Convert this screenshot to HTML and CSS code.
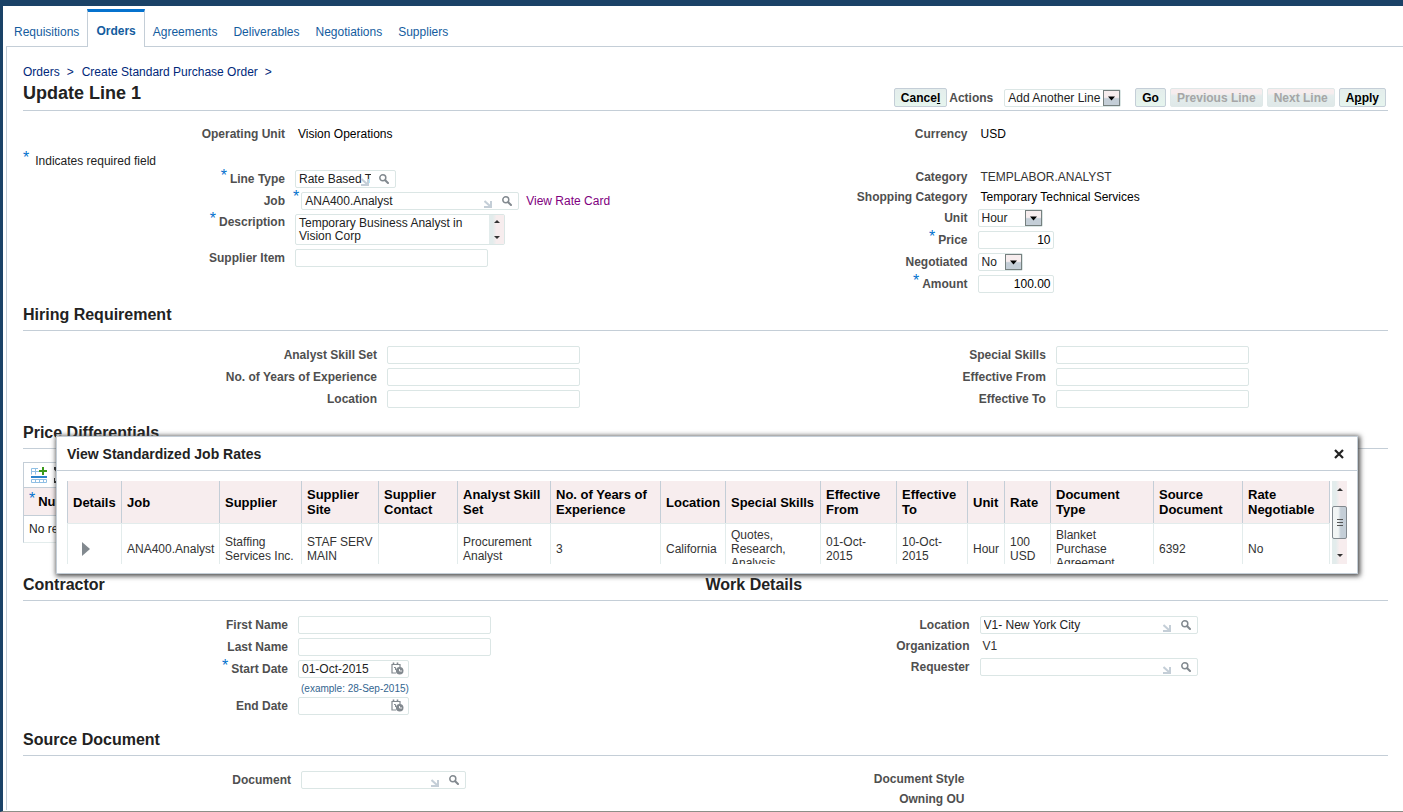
FILE: index.html
```
<!DOCTYPE html>
<html lang="en">
<head>
  <meta charset="UTF-8">
  <meta name="viewport" content="width=device-width, initial-scale=1.0">
  <title>Update Line 1</title>
  <link rel="stylesheet" href="styles.css">
</head>
<body>

<svg class="sprite" aria-hidden="true">
  <symbol id="icon-search" viewBox="0 0 10 10">
    <circle cx="3.8" cy="3.8" r="3" fill="none" stroke="#82898f" stroke-width="1.5"/>
    <path d="M6.2 6.2 L9 9" stroke="#82898f" stroke-width="2" stroke-linecap="round"/>
  </symbol>
  <symbol id="icon-grab" viewBox="0 0 8 8">
    <path d="M7 1 V7 H0" fill="none" stroke="#c4ced7" stroke-width="2"/>
    <path d="M0.5 1 L6 6" stroke="#c4ced7" stroke-width="2"/>
  </symbol>
  <symbol id="icon-date" viewBox="0 0 13 13">
    <path d="M1 2.5 H9 V6 M1 2 V11 H5" fill="none" stroke="#82898f" stroke-width="1.2"/>
    <path d="M2.5 0.5 V3 M6.5 0.5 V3" stroke="#82898f" stroke-width="1.6"/>
    <path d="M3 5.5 H4.5 V8" fill="none" stroke="#82898f"/>
    <circle cx="8.7" cy="8.7" r="3.8" fill="#82898f"/>
    <path d="M8.5 7 V9 H11" fill="none" stroke="#fff" stroke-width="0.9"/>
  </symbol>
  <symbol id="icon-drop" viewBox="0 0 9 5">
    <path d="M1 0.5 H8 L4.5 4.5 Z" fill="#000"/>
  </symbol>
</svg>

<div class="page">
  <nav class="tabs">
    <a href="#">Requisitions</a>
    <a href="#" class="active">Orders</a>
    <a href="#">Agreements</a>
    <a href="#">Deliverables</a>
    <a href="#">Negotiations</a>
    <a href="#">Suppliers</a>
  </nav>

  <main class="panel">
    <div class="breadcrumb">
      <a href="#">Orders</a><span>&gt;</span><a href="#">Create Standard Purchase Order</a><span>&gt;</span>
    </div>

    <div class="title-bar">
      <h1>Update Line 1</h1>
      <div class="actions">
        <button type="button">Cance<u>l</u></button>
        <label for="actions">Actions</label>
        <span class="select select-actions">
          <select id="actions"><option>Add Another Line</option></select>
          <svg class="drop"><use href="#icon-drop"/></svg>
        </span>
        <button type="button" class="go">Go</button>
        <button type="button" disabled>Previous Line</button>
        <button type="button" disabled>Next Line</button>
        <button type="button">A<u>p</u>ply</button>
      </div>
    </div>

    <form class="form form-line">
      <div class="column">
        <div class="row text-row">
          <span class="label">Operating Unit</span>
          <span class="value">Vision Operations</span>
        </div>
        <p class="note"><span class="req">*</span>Indicates required field</p>
        <div class="row">
          <label class="label" for="lineType"><span class="req">*</span>Line Type</label>
          <span class="field lov lov-short">
            <input id="lineType" type="text" value="Rate Based T">
            <svg class="grab"><use href="#icon-grab"/></svg>
            <button type="button" aria-label="Search"><svg class="search"><use href="#icon-search"/></svg></button>
          </span>
        </div>
        <div class="row row-job">
          <label class="label" for="job">Job</label>
          <span class="req">*</span>
          <span class="field lov">
            <input id="job" type="text" value="ANA400.Analyst">
            <svg class="grab"><use href="#icon-grab"/></svg>
            <button type="button" aria-label="Search"><svg class="search"><use href="#icon-search"/></svg></button>
          </span>
          <a href="#" class="rate-card">View Rate Card</a>
        </div>
        <div class="row row-top">
          <label class="label" for="description"><span class="req">*</span>Description</label>
          <span class="field area">
            <textarea id="description" rows="2">Temporary Business Analyst in Vision Corp</textarea>
            <span class="scrollbar"><i class="up"></i><i class="down"></i></span>
          </span>
        </div>
        <div class="row">
          <label class="label" for="supplierItem">Supplier Item</label>
          <input class="field text" id="supplierItem" type="text">
        </div>
      </div>

      <div class="column">
        <div class="row text-row row-currency">
          <span class="label">Currency</span>
          <span class="value">USD</span>
        </div>
        <div class="row text-row">
          <span class="label">Category</span>
          <span class="value soft">TEMPLABOR.ANALYST</span>
        </div>
        <div class="row text-row">
          <span class="label">Shopping Category</span>
          <span class="value">Temporary Technical Services</span>
        </div>
        <div class="row">
          <label class="label" for="unit">Unit</label>
          <span class="select select-unit">
            <select id="unit"><option>Hour</option></select>
            <svg class="drop"><use href="#icon-drop"/></svg>
          </span>
        </div>
        <div class="row">
          <label class="label" for="price"><span class="req">*</span>Price</label>
          <input class="field number" id="price" type="text" value="10">
        </div>
        <div class="row">
          <label class="label" for="negotiated">Negotiated</label>
          <span class="select select-negotiated">
            <select id="negotiated"><option>No</option></select>
            <svg class="drop"><use href="#icon-drop"/></svg>
          </span>
        </div>
        <div class="row">
          <label class="label" for="amount"><span class="req">*</span>Amount</label>
          <input class="field number" id="amount" type="text" value="100.00">
        </div>
      </div>
    </form>

    <h2>Hiring Requirement</h2>
    <form class="form form-hiring">
      <div class="column">
        <div class="row">
          <label class="label" for="skillSet">Analyst Skill Set</label>
          <input class="field text" id="skillSet" type="text">
        </div>
        <div class="row">
          <label class="label" for="experience">No. of Years of Experience</label>
          <input class="field text" id="experience" type="text">
        </div>
        <div class="row">
          <label class="label" for="hireLocation">Location</label>
          <input class="field text" id="hireLocation" type="text">
        </div>
      </div>
      <div class="column">
        <div class="row">
          <label class="label" for="specialSkills">Special Skills</label>
          <input class="field text" id="specialSkills" type="text">
        </div>
        <div class="row">
          <label class="label" for="effectiveFrom">Effective From</label>
          <input class="field text" id="effectiveFrom" type="text">
        </div>
        <div class="row">
          <label class="label" for="effectiveTo">Effective To</label>
          <input class="field text" id="effectiveTo" type="text">
        </div>
      </div>
    </form>

    <h2>Price Differentials</h2>
    <div class="differentials">
      <div class="toolbar">
        <button type="button" aria-label="Add row">
          <svg width="17" height="17" viewBox="0 0 17 17">
            <path d="M0.5 7.5 V1.5 H7 M0.5 4.5 H8 M4.5 2 V7.5" fill="none" stroke="#8fbfe4"/>
            <rect x="0" y="9" width="16" height="2" fill="#2a83cc"/>
            <path d="M0.5 12.5 H15.5 V15.5 H0.5 Z M4.5 12 V16 M8.5 12 V16 M12.5 12 V16" fill="#fff" stroke="#8fbfe4"/>
            <path d="M12 0 V8 M8 4 H16" stroke="#3a9a1c" stroke-width="2"/>
          </svg>
        </button>
        <button type="button" aria-label="Detach">
          <svg width="16" height="16" viewBox="0 0 16 16">
            <path d="M0 1 H4 M0 1 L3 4 M12 1 H16 V5 M0 11 V15 H4 M12 15 H16 V11" fill="none" stroke="#222" stroke-width="2"/>
          </svg>
        </button>
      </div>
      <table>
        <tr><th><span class="req">*</span>Number</th></tr>
        <tr><td>No results found.</td></tr>
      </table>
    </div>

    <div class="heading-pair">
      <h2>Contractor</h2>
      <h2>Work Details</h2>
    </div>
    <form class="form form-contractor">
      <div class="column">
        <div class="row">
          <label class="label" for="firstName">First Name</label>
          <input class="field text" id="firstName" type="text">
        </div>
        <div class="row">
          <label class="label" for="lastName">Last Name</label>
          <input class="field text" id="lastName" type="text">
        </div>
        <div class="row">
          <label class="label" for="startDate"><span class="req">*</span>Start Date</label>
          <span class="field date">
            <input id="startDate" type="text" value="01-Oct-2015">
            <button type="button" aria-label="Pick date"><svg><use href="#icon-date"/></svg></button>
          </span>
        </div>
        <div class="row hint-row">
          <span class="label"></span>
          <span class="hint">(example: 28-Sep-2015)</span>
        </div>
        <div class="row">
          <label class="label" for="endDate">End Date</label>
          <span class="field date">
            <input id="endDate" type="text">
            <button type="button" aria-label="Pick date"><svg><use href="#icon-date"/></svg></button>
          </span>
        </div>
      </div>
      <div class="column">
        <div class="row">
          <label class="label" for="workLocation">Location</label>
          <span class="field lov">
            <input id="workLocation" type="text" value="V1- New York City">
            <svg class="grab"><use href="#icon-grab"/></svg>
            <button type="button" aria-label="Search"><svg class="search"><use href="#icon-search"/></svg></button>
          </span>
        </div>
        <div class="row text-row">
          <span class="label">Organization</span>
          <span class="value soft">V1</span>
        </div>
        <div class="row">
          <label class="label" for="requester">Requester</label>
          <span class="field lov">
            <input id="requester" type="text">
            <svg class="grab"><use href="#icon-grab"/></svg>
            <button type="button" aria-label="Search"><svg class="search"><use href="#icon-search"/></svg></button>
          </span>
        </div>
      </div>
    </form>

    <h2>Source Document</h2>
    <form class="form form-source">
      <div class="column">
        <div class="row">
          <label class="label" for="document">Document</label>
          <span class="field lov lov-medium">
            <input id="document" type="text">
            <svg class="grab"><use href="#icon-grab"/></svg>
            <button type="button" aria-label="Search"><svg class="search"><use href="#icon-search"/></svg></button>
          </span>
        </div>
      </div>
      <div class="column">
        <div class="row text-row"><span class="label">Document Style</span></div>
        <div class="row text-row"><span class="label">Owning OU</span></div>
      </div>
    </form>
  </main>

  <div class="dialog" role="dialog" aria-labelledby="dialogTitle">
    <div class="dialog-head">
      <h3 id="dialogTitle">View Standardized Job Rates</h3>
      <button type="button" aria-label="Close">
        <svg width="10" height="10" viewBox="0 0 10 10">
          <path d="M1 1 L9 9 M9 1 L1 9" stroke="#222" stroke-width="2.2"/>
        </svg>
      </button>
    </div>
    <div class="dialog-body">
      <table class="rates">
        <colgroup>
          <col class="c-details"><col class="c-job"><col class="c-supplier"><col class="c-site">
          <col class="c-contact"><col class="c-skill"><col class="c-years"><col class="c-location">
          <col class="c-special"><col class="c-from"><col class="c-to"><col class="c-unit">
          <col class="c-rate"><col class="c-type"><col class="c-source"><col class="c-nego">
        </colgroup>
        <tr>
          <th>Details</th>
          <th>Job</th>
          <th>Supplier</th>
          <th>Supplier<br>Site</th>
          <th>Supplier<br>Contact</th>
          <th>Analyst Skill<br>Set</th>
          <th>No. of Years of<br>Experience</th>
          <th>Location</th>
          <th>Special Skills</th>
          <th>Effective<br>From</th>
          <th>Effective<br>To</th>
          <th>Unit</th>
          <th>Rate</th>
          <th>Document<br>Type</th>
          <th>Source<br>Document</th>
          <th>Rate<br>Negotiable</th>
        </tr>
        <tr>
          <td class="expand">
            <button type="button" aria-label="Show details">
              <svg width="8" height="14" viewBox="0 0 8 14"><path d="M0 0 L8 7 L0 14 Z" fill="#82898f"/></svg>
            </button>
          </td>
          <td>ANA400.Analyst</td>
          <td>Staffing<br>Services Inc.</td>
          <td>STAF SERV<br>MAIN</td>
          <td></td>
          <td>Procurement<br>Analyst</td>
          <td>3</td>
          <td>California</td>
          <td>Quotes,<br>Research,<br>Analysis</td>
          <td>01-Oct-<br>2015</td>
          <td>10-Oct-<br>2015</td>
          <td>Hour</td>
          <td>100<br>USD</td>
          <td>Blanket<br>Purchase<br>Agreement</td>
          <td>6392</td>
          <td>No</td>
        </tr>
      </table>
      <span class="scrollbar"><i class="up"></i><i class="thumb"></i><i class="down"></i></span>
    </div>
  </div>
</div>

</body>
</html>
```
FILE: styles.css
```
* {
  box-sizing: border-box;
}
body {
  margin: 0;
  font-family: "Liberation Sans", Arial, Helvetica, sans-serif;
  font-size: 12px;
  line-height: 16px;
  color: #222;
  background-color: #fff;
}
a {
  color: #00287a;
  text-decoration: none;
}
input, select, textarea, button {
  font-family: inherit;
  font-size: 12px;
  color: #222;
  margin: 0;
}
button {
  cursor: pointer;
}
svg {
  display: block;
}
.sprite {
  display: none;
}
.page {
  position: relative;
  min-height: 100vh;
  border-top: 6px solid #1a4267;
  border-left: 3px solid #1a4267;
  border-bottom: 1px solid #8c8f88;
}

/* tabs */
.tabs {
  display: flex;
  padding: 3px 0 0 3px;
}
.tabs a {
  height: 37px;
  padding: 15px 8px 0;
  color: #145c9e;
}
.tabs a.active {
  height: 38px;
  margin-bottom: -1px;
  padding-top: 11px;
  font-weight: bold;
  background-color: #fff;
  border: 1px solid #c4ced7;
  border-top: 3px solid #0572ce;
  border-bottom: none;
}
.panel {
  margin-left: 3px;
  padding: 17px 15px 3px 16px;
  border-top: 1px solid #c4ced7;
  border-left: 1px solid #c4ced7;
}

/* page title */
.breadcrumb span {
  margin: 0 8px 0 7px;
  color: #00287a;
}
.title-bar {
  display: flex;
  justify-content: space-between;
  align-items: flex-end;
  margin-top: 3px;
  height: 28px;
  padding: 0 2px 3px 0;
  border-bottom: 1px solid #c4ced7;
}
h1 {
  align-self: flex-start;
  margin: 0;
  font-size: 18px;
  line-height: 20px;
}
h2 {
  margin: 15px 0 0;
  padding-bottom: 5px;
  font-size: 16px;
  line-height: 20px;
  border-bottom: 1px solid #c4ced7;
}
.actions {
  display: flex;
  align-items: center;
  gap: 4px;
}
.actions label {
  margin: 0 7px 0 -2px;
  font-weight: bold;
  color: #4f4f4f;
}
.actions button {
  height: 19px;
  padding: 0 6px;
  font-weight: bold;
  line-height: 16px;
  color: #000;
  background: linear-gradient(#e4edec, #e6f5ee);
  border: 1px solid #c4ced7;
  border-radius: 2px;
}
.actions button:disabled {
  color: #a6a6a6;
  background: linear-gradient(#f7edee 25%, #e3ecec 40%, #dfe8e8);
  border-color: #dfe8e8;
}
.actions .go {
  margin-left: 10px;
}

/* forms */
.form {
  display: grid;
  grid-template-columns: 1fr 1fr;
  margin: 15px 0 0;
}
.row {
  display: flex;
  align-items: center;
  min-height: 18px;
  margin-bottom: 4px;
}
.row:last-child {
  margin-bottom: 0;
}
.text-row {
  min-height: 16px;
}
.row-top {
  align-items: flex-start;
}
.row-currency {
  margin-bottom: 27px;
}
.label {
  flex: none;
  width: 262px;
  margin-right: 10px;
  font-weight: bold;
  text-align: right;
  color: #4f4f4f;
}
.form-hiring {
  grid-template-columns: 49fr 51fr;
}
.form-hiring .label {
  width: 354px;
}
.form-contractor .label {
  width: 265px;
}
.form-contractor .column + .column .label {
  width: 264px;
}
.form-source .label {
  width: 268px;
}
.form-source .column + .column .label {
  width: 259px;
}
.form-line + h2 {
  margin-top: 12px;
}
.req {
  margin-right: 3px;
  font-size: 16px;
  font-weight: normal;
  line-height: 10px;
  vertical-align: 2px;
  color: #0572ce;
}
.note {
  margin: 11px 0 1px;
}
.note .req {
  margin-right: 6px;
}
.row-job .label {
  margin-right: 8px;
}
.row-job .req {
  align-self: flex-start;
  margin-right: 2px;
}
.value {
  padding-left: 3px;
  color: #000;
}
.value.soft {
  color: #333;
}
.rate-card {
  margin-left: 7px;
  color: #800080;
}
.field, .select select {
  height: 18px;
  background-color: #fff;
  border: 1px solid #dbe6e5;
  border-radius: 2px;
}
.text {
  width: 193px;
  padding: 0 3px;
}
.number {
  width: 76px;
  padding: 0 2px;
  text-align: right;
  color: #000;
}
.lov, .date {
  position: relative;
  display: flex;
  align-items: center;
  width: 218px;
}
.lov-short {
  width: 101px;
}
.lov-medium {
  width: 165px;
}
.lov input, .date input {
  flex: 1;
  min-width: 0;
  height: 16px;
  padding: 0 0 0 3px;
  background: none;
  border: none;
}
.lov button, .date button {
  padding: 0;
  background: none;
  border: none;
}
.lov button {
  width: 24px;
  padding-left: 8px;
}
.search {
  width: 10px;
  height: 10px;
}
/* resize handle lies over the end of the text */
.grab {
  position: absolute;
  right: 26px;
  bottom: 1px;
  width: 8px;
  height: 8px;
}
.date {
  width: 111px;
}
.date button {
  margin-right: 4px;
}
.date svg {
  width: 13px;
  height: 13px;
}
.hint-row {
  min-height: 15px;
  margin-bottom: 0;
}
.hint {
  padding-left: 3px;
  font-size: 10px;
  line-height: 12px;
  color: #33658f;
}
.area {
  display: flex;
  width: 210px;
  height: 31px;
}
.area textarea {
  flex: 1;
  min-width: 0;
  height: 29px;
  padding: 2px 3px 0;
  line-height: 13px;
  background: none;
  border: none;
  resize: none;
  overflow: hidden;
}
.select {
  position: relative;
  display: flex;
}
.select select {
  appearance: none;
  width: 100%;
  padding: 0 18px 0 3px;
}
.select-actions {
  width: 117px;
}
.select-unit {
  width: 65px;
}
.select-negotiated {
  width: 45px;
}
.drop {
  position: absolute;
  top: 1px;
  right: 1px;
  width: 17px;
  height: 16px;
  padding: 5px 3px 4px;
  background: linear-gradient(#f7edee 45%, #c4ced7 55%);
  border: 1px solid #76807f;
  pointer-events: none;
}

/* scrollbars */
.scrollbar {
  display: flex;
  flex-direction: column;
  align-items: center;
  justify-content: space-between;
  flex: none;
  width: 15px;
  padding: 5px 0;
  background: linear-gradient(to right, #e3ecec 25%, #f7edee 50%);
}
.up, .down {
  border: 3px solid transparent;
}
.up {
  border-top: none;
  border-bottom-color: #333;
}
.down {
  border-bottom: none;
  border-top-color: #333;
}
.dialog .scrollbar {
  padding: 7px 0;
}
.thumb {
  width: 15px;
  height: 33px;
  background:
    repeating-linear-gradient(#555 0 1px, transparent 1px 3px) 4px 12px / 6px 9px no-repeat,
    linear-gradient(to right, #f2f5f5 40%, #c4ced7 60%);
  border: 1px solid #82898f;
  border-radius: 2px;
}

/* price differentials */
.differentials {
  width: 60%;
  margin: 13px 0 32px;
  border: 1px solid #c4ced7;
  border-bottom-color: #e3ecec;
}
.toolbar {
  display: flex;
  align-items: center;
  gap: 6px;
  height: 24px;
  padding-left: 7px;
}
.toolbar button {
  padding: 0;
  background: none;
  border: none;
}
.differentials table {
  width: 100%;
  border-collapse: collapse;
}
.differentials th {
  height: 28px;
  padding: 0 5px;
  font-size: 13px;
  text-align: left;
  color: #000;
  background-color: #f7edee;
  border: solid #c4ced7;
  border-width: 1px 0;
}
.differentials td {
  height: 26px;
  padding: 0 5px;
}
.heading-pair {
  display: grid;
  grid-template-columns: 1fr 1fr;
}
.heading-pair h2 {
  margin-top: 0;
}

/* job rates popup */
.dialog {
  position: absolute;
  top: 430px;
  left: 53px;
  right: 45px;
  height: 138px;
  background-color: #fff;
  border: 1px solid #c4ced7;
  box-shadow: 1px 1px 5px 1px #444;
}
.dialog-head {
  display: flex;
  align-items: center;
  justify-content: space-between;
  height: 34px;
  padding: 0 13px 0 10px;
  border-bottom: 1px solid #c4ced7;
}
.dialog-head h3 {
  margin: 0;
  font-size: 14px;
}
.dialog-head button {
  padding: 0;
  background: none;
  border: none;
}
.dialog-body {
  display: flex;
  justify-content: space-between;
  height: 83px;
  margin: 10px 10px 0;
  overflow: hidden;
}
.dialog-body .scrollbar {
  margin-left: 2px;
}
.rates {
  flex: 1;
  table-layout: fixed;
  border-collapse: separate;
  border-spacing: 0;
}
.rates th, .rates td {
  padding: 0 0 0 5px;
  text-align: left;
  white-space: nowrap;
}
.rates th {
  height: 42px;
  font-size: 13px;
  line-height: 15px;
  color: #000;
  background-color: #f7edee;
  border-left: 1px solid #c4ced7;
}
.rates td {
  height: 51px;
  line-height: 14px;
  color: #333;
  border-top: 1px solid #e3ecec;
  border-left: 1px solid #e3ecec;
}
.rates th:last-child {
  border-right: 1px solid #c4ced7;
}
.rates td:last-child {
  border-right: 1px solid #e3ecec;
}
.rates .expand {
  padding-left: 14px;
}
.expand button {
  display: block;
  padding: 0;
  background: none;
  border: none;
}
.c-details { width: 54px; }
.c-job { width: 98px; }
.c-supplier { width: 82px; }
.c-site { width: 77px; }
.c-contact { width: 79px; }
.c-skill { width: 93px; }
.c-years { width: 110px; }
.c-location { width: 65px; }
.c-special { width: 95px; }
.c-from { width: 76px; }
.c-to { width: 71px; }
.c-unit { width: 37px; }
.c-rate { width: 46px; }
.c-type { width: 103px; }
.c-source { width: 89px; }
.c-nego { width: 88px; }
```
